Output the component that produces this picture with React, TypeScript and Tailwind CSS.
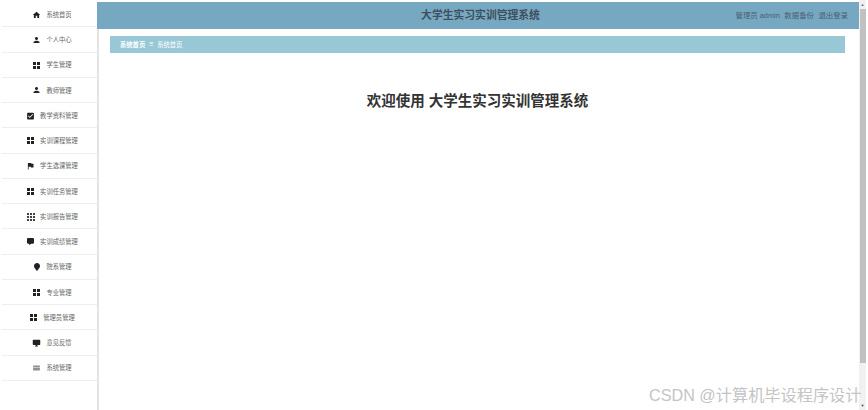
import { ReactNode } from "react";
import {
  MdCheckBox,
  MdDesktopWindows,
  MdFlag,
  MdHome,
  MdMenu,
  MdPerson,
} from "react-icons/md";
import { FaCommentAlt, FaMapMarker } from "react-icons/fa";

function Dots() {
  return (
    <span className="grid grid-cols-2 grid-rows-2 gap-[1px] w-[7px] h-[7px]">
      <i className="bg-[#222]" />
      <i className="bg-[#222]" />
      <i className="bg-[#222]" />
      <i className="bg-[#222]" />
    </span>
  );
}

function Nine() {
  return (
    <span className="grid grid-cols-3 grid-rows-3 gap-[1px] w-[8px] h-[8px]">
      {Array.from({ length: 9 }).map((_, i) => (
        <i key={i} className="bg-[#444]" />
      ))}
    </span>
  );
}

const icon = "w-[10px] h-[10px] text-[#222]";

const menu: { label: string; icon: ReactNode }[] = [
  { label: "系统首页", icon: <MdHome className={icon} /> },
  { label: "个人中心", icon: <MdPerson className={icon} /> },
  { label: "学生管理", icon: <Dots /> },
  { label: "教师管理", icon: <MdPerson className={icon} /> },
  { label: "教学资料管理", icon: <MdCheckBox className={icon} /> },
  { label: "实训课程管理", icon: <Dots /> },
  { label: "学生选课管理", icon: <MdFlag className={icon} /> },
  { label: "实训任务管理", icon: <Dots /> },
  { label: "实训报告管理", icon: <Nine /> },
  { label: "实训成绩管理", icon: <FaCommentAlt className="w-[7px] h-[7px] text-[#222]" /> },
  { label: "院系管理", icon: <FaMapMarker className="w-[8px] h-[8px] text-[#222]" /> },
  { label: "专业管理", icon: <Dots /> },
  { label: "管理员管理", icon: <Dots /> },
  { label: "意见反馈", icon: <MdDesktopWindows className={icon} /> },
  { label: "系统管理", icon: <MdMenu className={icon} /> },
];

const cjk = "font-['Liberation_Sans','Noto_Sans_CJK_SC',sans-serif]";

export default function App() {
  return (
    <div className={`relative flex h-[410px] w-[868px] overflow-hidden bg-white pt-[2px] ${cjk}`}>
      {/* Sidebar */}
      <aside className="w-[97px] shrink-0 h-full pl-[2px]">
        {menu.map((item) => (
          <div
            key={item.label}
            className="h-[25.25px] flex items-center justify-center gap-[5px] pl-[5px] pt-[1px] border-b border-[#eeeeee] text-[6.3px] text-[#666]"
          >
            <span className="w-[9px] flex justify-center">{item.icon}</span>
            <span>{item.label}</span>
          </div>
        ))}
      </aside>

      {/* Main */}
      <main className="w-[762px] shrink-0 flex flex-col">
        <header className="h-[27px] bg-[#76a8c1] flex items-center relative shrink-0">
          <h1 className="flex-1 text-center pl-[5px] text-[10.8px] font-bold text-[#3f4f5e]">
            大学生实习实训管理系统
          </h1>
          <div className="absolute right-[11px] top-0 h-full flex items-center gap-[4.5px] text-[7.4px] text-[#4a5f72]">
            <span>管理员 admin</span>
            <span>数据备份</span>
            <span>退出登录</span>
          </div>
        </header>
        <div className="flex-1 border-l-2 border-[#e4e4e4]">
          <div className="mt-[7px] ml-[11px] w-[735px] h-[17px] bg-[#98c8d6] flex items-center pl-[10px] gap-[2px] text-[6.3px] text-white">
            <span className="font-bold">系统首页</span>
            <span className="mx-[2px] text-[5px]">☰</span>
            <span>系统首页</span>
          </div>
          <h2 className="mt-[38px] pr-[3px] text-center text-[14.5px] font-bold text-[#333] leading-[20px]">
            欢迎使用 大学生实习实训管理系统
          </h2>
        </div>
      </main>

      {/* Scrollbar */}
      <div className="w-[7px] shrink-0 h-[410px] -mt-[2px] bg-[#f1f1f1] flex flex-col items-center">
        <span className="h-[9px] flex items-center justify-center text-[4px] text-[#666]">▲</span>
        <div className="w-[6px] h-[354px] bg-[#c1c1c1]" />
        <span className="mt-auto h-[9px] flex items-center justify-center text-[4px] text-[#444]">▼</span>
      </div>

      {/* Watermark */}
      <div className="absolute left-[649px] top-[386px] text-[16.2px] leading-[18px] text-[#c4c4c4] whitespace-nowrap">
        CSDN @计算机毕设程序设计
      </div>
    </div>
  );
}
